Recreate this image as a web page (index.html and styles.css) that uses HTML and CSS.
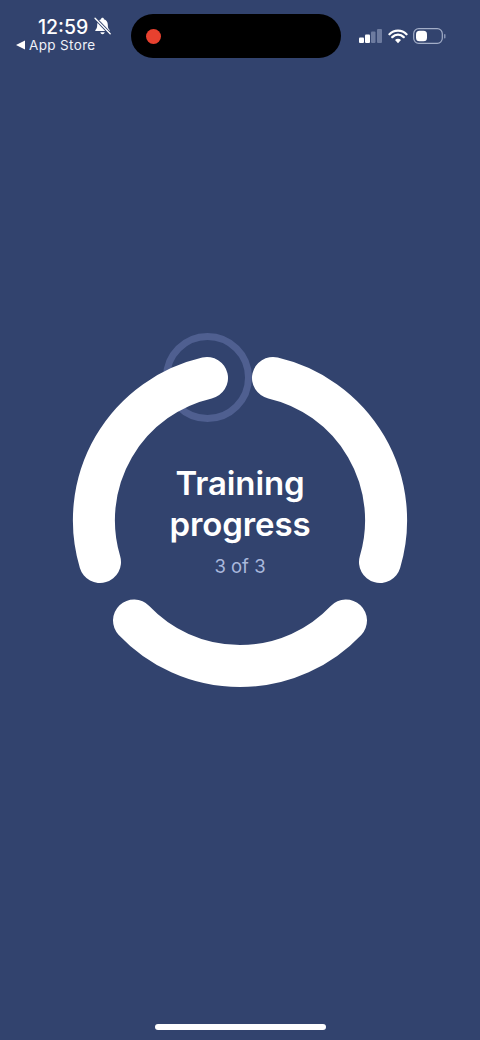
FILE: index.html
```html
<!DOCTYPE html>
<html lang="en">
<head>
<meta charset="utf-8">
<title>Training progress</title>
<link rel="stylesheet" href="styles.css">
</head>
<body>
<div class="screen">
  <header class="status">
    <div class="status-left">
      <div class="clock-row">
        <span class="clock">12:59</span>
        <svg class="bell" viewBox="1 0.500 14 15" width="17" height="18" aria-hidden="true">
          <path d="M8 1.200c.7 0 1.200.5 1.200 1.100 2 .5 3.200 2.200 3.200 4.400 0 2.600.5 3.500 1.500 4.600.3.400.1.900-.4.900H2.500c-.5 0-.7-.5-.4-.9 1-1.100 1.500-2 1.500-4.600 0-2.200 1.200-3.900 3.200-4.400C6.800 1.700 7.300 1.200 8 1.200z" fill="#fff"/>
          <path d="M6.200 13.200h3.600c-.2 1-.9 1.600-1.800 1.600s-1.600-.6-1.800-1.600z" fill="#fff"/>
          <path d="M1.800 1.500l12.600 13" stroke="#32436e" stroke-width="2.600"/>
          <path d="M1.800 1.500l12.600 13" stroke="#fff" stroke-width="1.100" stroke-linecap="round"/>
        </svg>
      </div>
      <div class="back-row">
        <svg class="back" viewBox="0 0 9 10" width="9" height="10" aria-hidden="true"><path d="M0 5L9 0.500v9z" fill="#fff"/></svg>
        <span>App Store</span>
      </div>
    </div>
    <div class="island"><span class="rec"></span></div>
    <div class="status-right">
      <svg viewBox="0 0 23 14" width="23" height="14" aria-hidden="true">
        <rect x="0" y="8.500" width="5" height="5.500" rx="1" fill="#fff"/>
        <rect x="6" y="5.500" width="5" height="8.500" rx="1" fill="#fff"/>
        <rect x="12" y="2.500" width="4.500" height="11.500" rx="1" fill="#6d7b9f"/>
        <rect x="18" y="0" width="5" height="14" rx="1" fill="#6d7b9f"/>
      </svg>
      <svg viewBox="0 0 20 15" width="20" height="15" aria-hidden="true">
        <path d="M1.500 5.200a12 12 0 0 1 17 0M4.300 8.100a8 8 0 0 1 11.400 0" fill="none" stroke="#fff" stroke-width="2.300" stroke-linecap="round"/>
        <path d="M7 10.900a4.200 4.200 0 0 1 6 0L10 14.200z" fill="#fff"/>
      </svg>
      <svg viewBox="0 0 33 16" width="33" height="16" aria-hidden="true">
        <rect x="0.700" y="0.700" width="28.600" height="14.600" rx="5" fill="none" stroke="#a3aec8" stroke-width="1.200"/>
        <rect x="3" y="2.700" width="11" height="10.600" rx="3.500" fill="#fff"/>
        <rect x="31" y="6" width="1.500" height="4.500" rx="0.700" fill="#8693b3"/>
      </svg>
    </div>
  </header>

  <main class="stage">
    <div class="dial">
      <svg class="dial-art" viewBox="60 320 360 380" width="360" height="380" aria-hidden="true">
        <circle class="pulse" cx="207.500" cy="377.500" r="41"/>
        <path class="arc" d="M207 378A146 146 0 0 0 100 562"/>
        <path class="arc" d="M273 378A146 146 0 0 1 380 562"/>
        <path class="arc" d="M134 620.500A146 146 0 0 0 346 620.500"/>
      </svg>
      <div class="dial-text">
        <h1>Training<br>progress</h1>
        <p>3 of 3</p>
      </div>
    </div>
  </main>

  <footer class="home"><span class="home-bar"></span></footer>
</div>
</body>
</html>
```
FILE: styles.css
```css
* { box-sizing: border-box; margin: 0; padding: 0; }
html, body { width: 480px; height: 1040px; overflow: hidden; }
body { background: #32436e; color: #fff; font-family: Inter, "Liberation Sans", sans-serif; }

.screen { width: 480px; height: 1040px; display: flex; flex-direction: column; }

.status { display: flex; align-items: flex-start; padding-top: 14px; height: 58px; }
.status-left { width: 131px; padding: 2px 0 0 16px; display: flex; flex-direction: column; }
.clock-row { display: flex; align-items: center; padding-left: 22px; height: 22px; gap: 5px; }
.clock { font-size: 19.500px; font-weight: 500; line-height: 22px; }
.bell { flex: none; margin: -2px 0 0 1px; }
.back-row { display: flex; align-items: center; gap: 4px; height: 18px; margin-top: -2px; font-size: 13.500px; font-weight: 400; line-height: 18px; letter-spacing: 0.350px; color: #eef1f8; }
.back { flex: none; }

.island { width: 210px; height: 44px; background: #000; border-radius: 22px; display: flex; align-items: center; padding-left: 14.500px; flex: none; }
.rec { width: 15px; height: 15px; border-radius: 50%; background: #e8412f; }

.status-right { display: flex; align-items: center; gap: 6px; padding: 14px 0 0 18px; }
.status-right svg:last-child { margin-left: -1px; }

.stage { flex: 1; padding-top: 262px; display: flex; justify-content: center; align-items: flex-start; }
.dial { width: 360px; height: 380px; display: grid; }
.dial-art, .dial-text { grid-area: 1 / 1; }
.dial-art { display: block; }
.pulse { fill: none; stroke: #4f5f90; stroke-width: 7; }
.arc { fill: none; stroke: #fff; stroke-width: 42; stroke-linecap: round; }

.dial-text { text-align: center; padding-top: 143px; }
.dial-text h1 { font-size: 33px; font-weight: 600; line-height: 41px; letter-spacing: -0.100px; }
.dial-text p { font-size: 18.500px; line-height: 24px; margin-top: 9px; color: #a9b8dc; }

.home { height: 30px; display: flex; justify-content: center; padding: 14px 0 0 1px; flex: none; }
.home-bar { width: 171px; height: 6px; border-radius: 3px; background: #fff; }
```
